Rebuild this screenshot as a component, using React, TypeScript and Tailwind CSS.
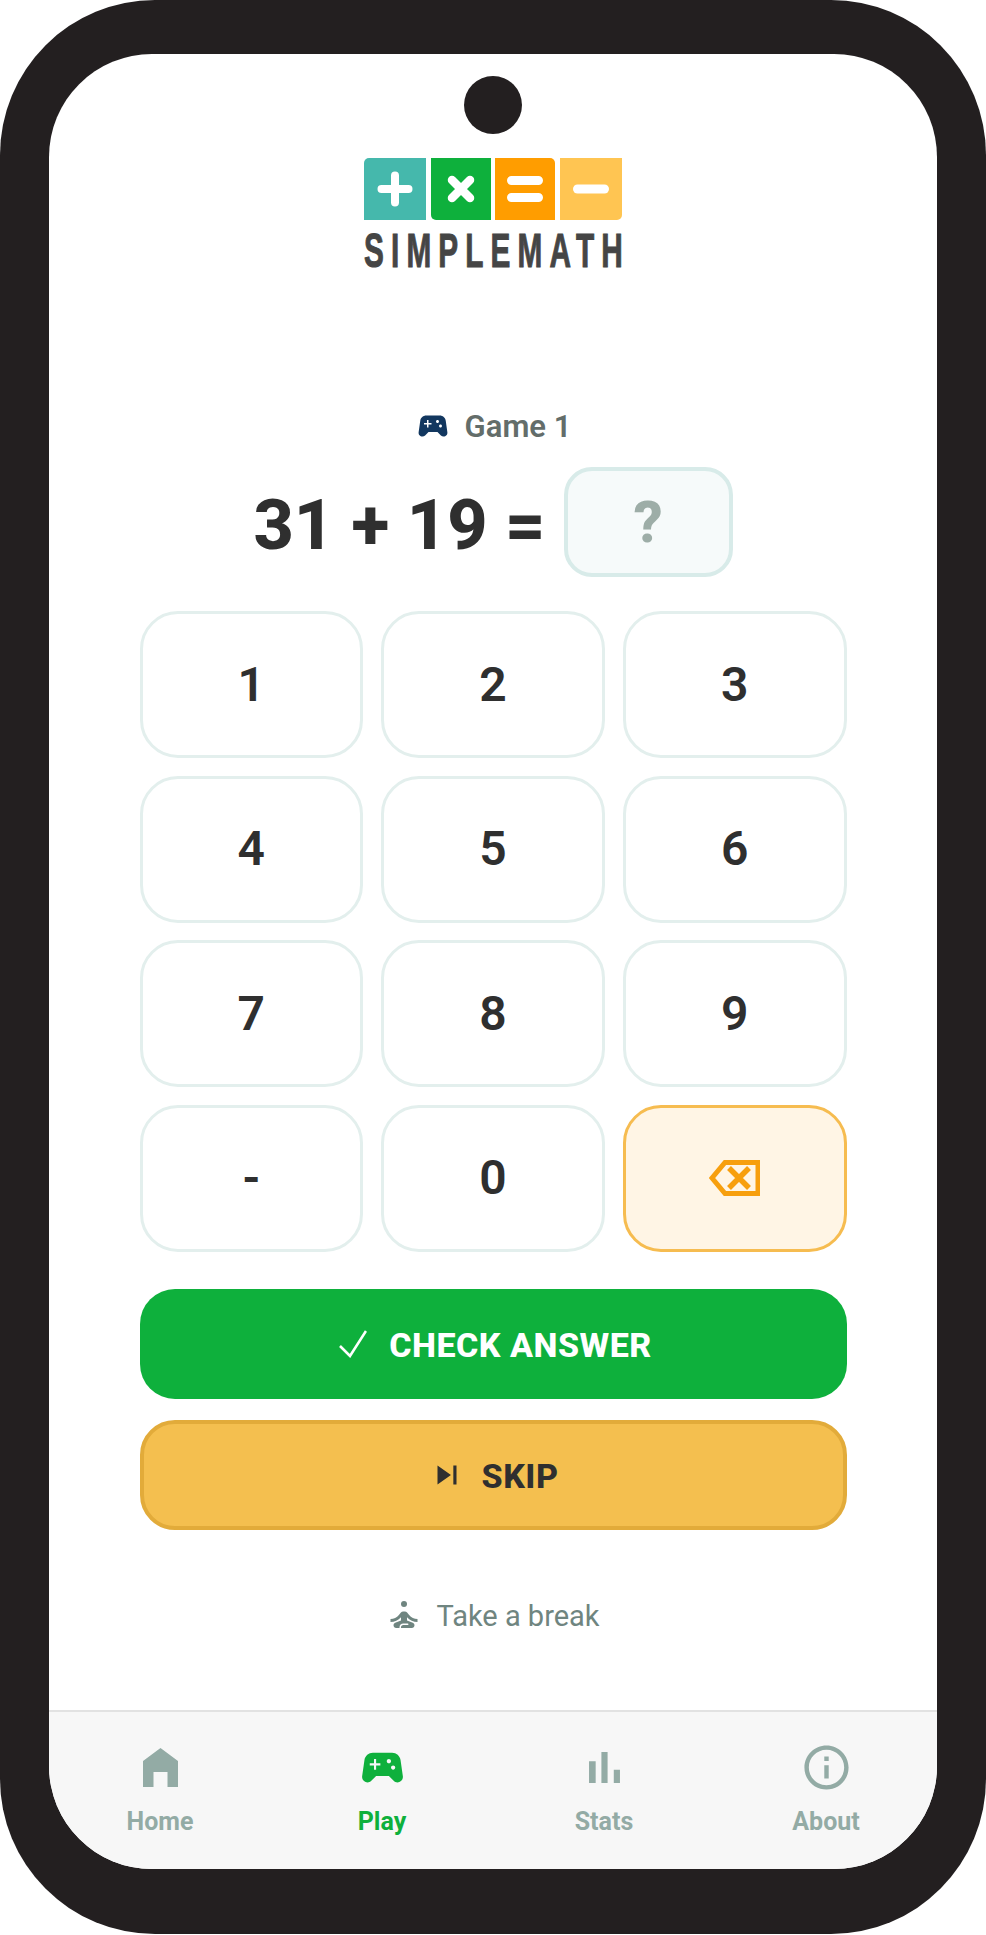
const GAMEPAD = "M21.58 16.09l-1.09-7.66C20.21 6.46 18.52 5 16.53 5H7.47C5.48 5 3.79 6.46 3.51 8.43l-1.09 7.66C2.2 17.63 3.39 19 4.94 19c.68 0 1.32-.27 1.8-.75L9 16h6l2.25 2.25c.48.48 1.13.75 1.8.75 1.56 0 2.75-1.37 2.53-2.91zM11 11H9v2H8v-2H6v-1h2V8h1v2h2v1zm4-1c-.55 0-1-.45-1-1s.45-1 1-1 1 .45 1 1-.45 1-1 1zm2 3c-.55 0-1-.45-1-1s.45-1 1-1 1 .45 1 1-.45 1-1 1z";

function Gamepad({ className }: { className: string }) {
  return (
    <svg viewBox="0 0 24 24" fill="currentColor" className={className}>
      <path d={GAMEPAD} />
    </svg>
  );
}

function Tile({ width, color, corner, children }: { width: string; color: string; corner: string; children: React.ReactNode }) {
  return (
    <div className={`h-[62px] flex items-center justify-center ${width} ${color} ${corner}`}>
      <svg viewBox="0 0 36 36" className="w-[36px] h-[36px]" stroke="white" strokeWidth="9" strokeLinecap="round" fill="none">
        {children}
      </svg>
    </div>
  );
}

function Logo() {
  return (
    <div className="w-[258px] flex flex-col">
      <div className="flex justify-between">
        <Tile width="w-[62px]" color="bg-[#45b8ac]" corner="rounded-tl-[5px]">
          <path d="M4.5 18h27M18 4.5v27" strokeWidth="8" />
        </Tile>
        <Tile width="w-[60px]" color="bg-[#0eb03c]" corner="rounded-bl-[5px]">
          <path d="M9 9l18 18M27 9L9 27" strokeWidth="8.5" />
        </Tile>
        <Tile width="w-[60px]" color="bg-[#ff9d00]" corner="rounded-tr-[5px]">
          <path d="M4.5 9.5h27M4.5 26.5h27" />
        </Tile>
        <Tile width="w-[62px]" color="bg-[#ffc552]" corner="rounded-br-[5px]">
          <path d="M4.5 18h27" />
        </Tile>
      </div>
      <div className="h-[34px] mt-[14px] flex items-center">
        <span className="origin-left scale-x-[0.62] whitespace-nowrap text-[48px] leading-none font-bold tracking-[11.5px] text-[#454545] [-webkit-text-stroke:1px_#454545] font-['Liberation_Sans',sans-serif]">
          SIMPLEMATH
        </span>
      </div>
    </div>
  );
}

function Key({ label }: { label: string }) {
  return (
    <button className="h-[147px] rounded-[38px] border-[3px] border-[#e3efed] bg-white flex items-center justify-center text-[48px] font-semibold text-[#2f2f2f]">
      {label}
    </button>
  );
}

const navItems = [
  {
    label: "Home",
    active: false,
    icon: (
      <svg viewBox="0 0 35 39" fill="currentColor" className="w-[35px] h-[39px]">
        <path d="M17.5 0L35 13v26H24.5V24h-14v15H0V13z" />
      </svg>
    ),
  },
  { label: "Play", active: true, icon: <Gamepad className="w-[51px] h-[51px]" /> },
  {
    label: "Stats",
    active: false,
    icon: (
      <svg viewBox="0 0 24 24" fill="currentColor" className="w-[53px] h-[53px]">
        <path d="M5 9.2h3V19H5zM10.6 5h2.8v14h-2.8zm5.6 8H19v6h-2.8z" />
      </svg>
    ),
  },
  {
    label: "About",
    active: false,
    icon: (
      <svg viewBox="0 0 24 24" fill="currentColor" className="w-[53px] h-[53px]">
        <path d="M11 7h2v2h-2zm0 4h2v6h-2zm1-9C6.48 2 2 6.48 2 12s4.48 10 10 10 10-4.48 10-10S17.52 2 12 2zm0 18c-4.41 0-8-3.59-8-8s3.59-8 8-8 8 3.59 8 8-3.59 8-8 8z" />
      </svg>
    ),
  },
];

export default function App() {
  return (
    <div className="w-[986px] h-[1935px] bg-white font-['Roboto',sans-serif]">
      {/* Phone frame */}
      <div className="h-[1934px] bg-[#231f20] rounded-[155px] pt-[54px] px-[49px] pb-[65px] flex">
        <div className="relative flex-1 bg-white rounded-[103px] overflow-hidden flex flex-col">
          {/* Camera */}
          <div className="absolute top-[22px] left-[415px] w-[58px] h-[58px] rounded-full bg-[#231f20]" />

          <div className="flex-1 flex flex-col items-center pt-[104px]">
            <Logo />

            {/* Game label */}
            <div className="mt-[142px] h-[32px] flex items-center gap-[14px]">
              <Gamepad className="w-[36px] h-[36px] text-[#12375f]" />
              <span className="text-[31px] leading-none font-semibold text-[#636d6a]">Game 1</span>
            </div>

            {/* Equation */}
            <div className="mt-[25px] flex items-center gap-[18px]">
              <span className="text-[70px] leading-none font-extrabold text-[#2f2f2f] translate-y-[3px]">31 + 19 =</span>
              <div className="w-[169px] h-[110px] rounded-[28px] border-4 border-[#d8ebe9] bg-[#f6fafa] flex items-center justify-center text-[58px] font-extrabold text-[#9dada7]">
                ?
              </div>
            </div>

            {/* Keypad */}
            <div className="mt-[34px] w-[707px] grid grid-cols-3 gap-x-[18px] gap-y-[17.5px]">
              {["1", "2", "3", "4", "5", "6", "7", "8", "9", "-", "0"].map((k) => (
                <Key key={k} label={k} />
              ))}
              <button className="h-[147px] rounded-[38px] border-[3px] border-[#f6bc50] bg-[#fff5e5] flex items-center justify-center">
                <svg viewBox="0 0 51 36" fill="none" stroke="#f79f0e" strokeWidth="5" className="w-[51px] h-[36px]">
                  <path d="M49 2.5H16L3 18l13 15.5h33z" />
                  <path d="M20 8l20 20M40 8L20 28" strokeWidth="5.5" />
                </svg>
              </button>
            </div>

            {/* Actions */}
            <div className="mt-[37px] w-[707px] flex flex-col gap-[21px]">
              <button className="h-[110px] pt-[3px] pl-[5px] rounded-[35px] bg-[#0eb03c] flex items-center justify-center gap-[22px] text-[34px] font-extrabold tracking-[0.5px] text-white">
                <svg viewBox="0 0 28 28" fill="none" stroke="white" strokeWidth="2.6" className="w-[28px] h-[28px] -translate-y-[1px]">
                  <path d="M1 16l10 10L27 1" />
                </svg>
                CHECK ANSWER
              </button>
              <button className="h-[110px] pt-[3px] pl-[2px] rounded-[35px] border-4 border-[#e2ab3a] bg-[#f4bf4f] flex items-center justify-center gap-[22px] text-[34px] font-extrabold tracking-[0.5px] text-[#2f2f2f]">
                <svg viewBox="0 0 24 24" fill="currentColor" className="w-[38px] h-[38px] -mr-[8px] -translate-y-[1px] -translate-x-[2px]">
                  <path d="M6 18l8.5-6L6 6v12zM16 6v12h2V6h-2z" />
                </svg>
                SKIP
              </button>
            </div>

            {/* Take a break */}
            <div className="mt-[68px] flex items-center gap-[14px] text-[29px] leading-[30px] text-[#6f8580]">
              <svg viewBox="0 0 24 24" fill="currentColor" className="w-[36px] h-[36px]">
                <circle cx="12" cy="4" r="2" />
                <path d="M21 16v-2c-2.24 0-4.16-.96-5.6-2.68l-1.34-1.6c-.38-.46-.94-.72-1.53-.72h-1.05c-.59 0-1.15.26-1.53.72l-1.34 1.6C7.16 13.04 5.24 14 3 14v2c2.77 0 5.19-1.17 7-3.25V15l-3.88 1.55c-.67.27-1.12.93-1.12 1.66C5 19.2 5.8 20 6.79 20H9v-.5c0-1.38 1.12-2.5 2.5-2.5h3c.28 0 .5.22.5.5s-.22.5-.5.5h-3c-.83 0-1.5.67-1.5 1.5v.5h7.21c.99 0 1.79-.8 1.79-1.79 0-.73-.45-1.39-1.12-1.66L14 15v-2.25c1.81 2.08 4.23 3.25 7 3.25z" />
              </svg>
              Take a break
            </div>
          </div>

          {/* Bottom nav */}
          <div className="h-[159px] border-t-2 border-[#e2e2e2] bg-[#f7f7f7] flex">
            {navItems.map((item) => (
              <div
                key={item.label}
                className={`flex-1 flex flex-col items-center pt-[29px] ${item.active ? "text-[#0eb03c]" : "text-[#93aba5]"}`}
              >
                <div className="h-[53px] flex items-center justify-center">{item.icon}</div>
                <span className="mt-[14px] text-[25px] leading-[28px] font-bold">{item.label}</span>
              </div>
            ))}
          </div>
        </div>
      </div>
    </div>
  );
}
